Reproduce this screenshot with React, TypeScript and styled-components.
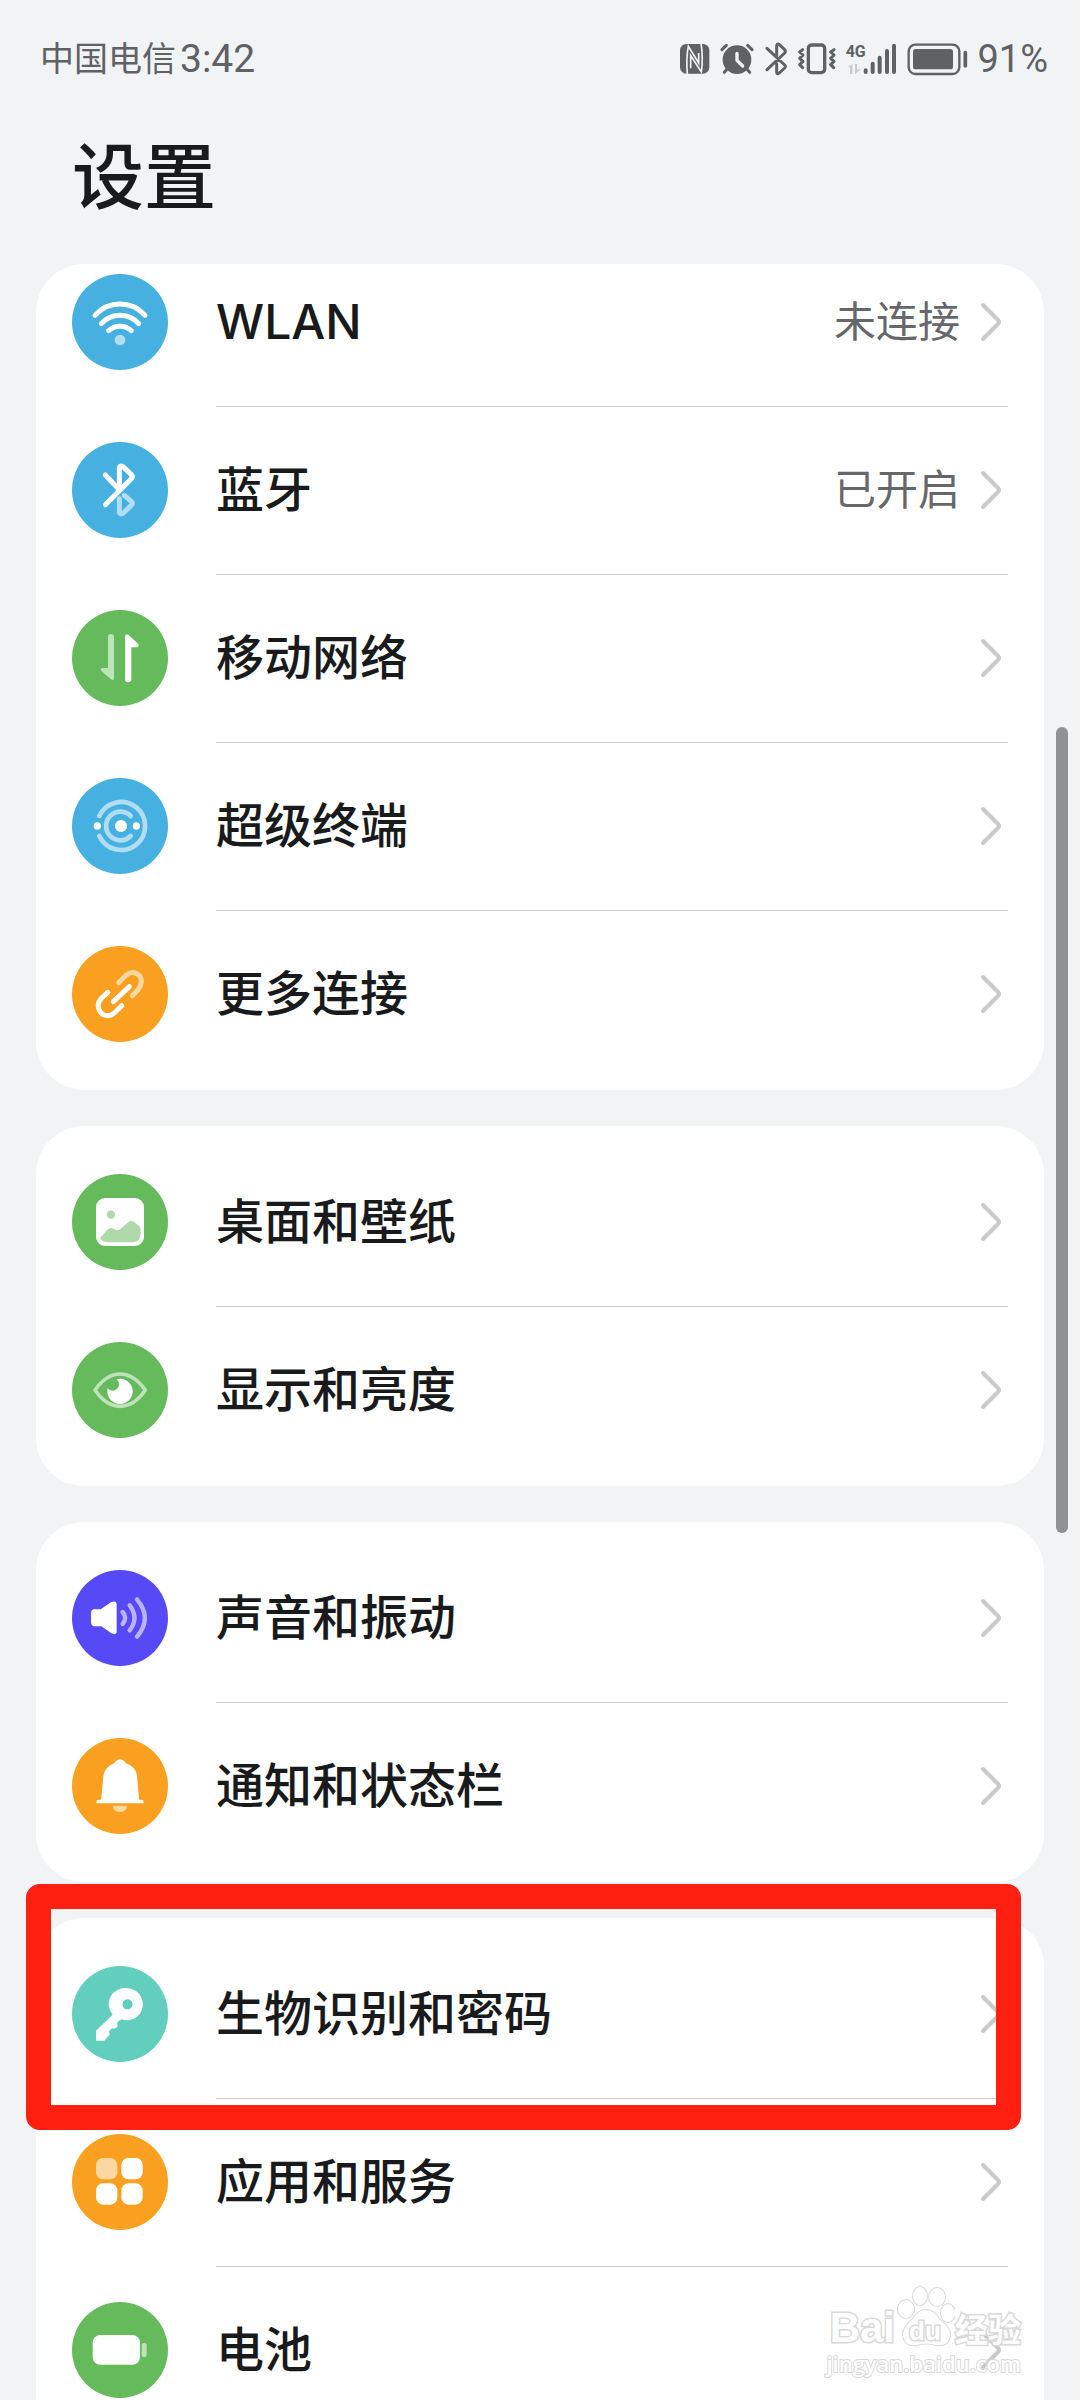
import React from 'react';
import styled, { createGlobalStyle } from 'styled-components';

const color = {
  page: '#f2f3f5',
  card: '#ffffff',
  ink: '#191a1b',
  muted: '#66676a',
  status: '#606164',
  line: '#cbcccd',
  chevron: '#cacacb',
  thumb: '#8f9192',
  marker: '#ff2011',
  blue: '#46b0e0',
  green: '#65bb5c',
  orange: '#f9a020',
  purple: '#564af7',
  teal: '#62cfbe',
  watermark: '#d9d9da',
};

const GlobalStyle = createGlobalStyle`
  *, *::before, *::after { box-sizing: border-box; }
  body {
    margin: 0;
    background: ${color.page};
    color: ${color.ink};
    font-family: Inter, "Noto Sans CJK SC", sans-serif;
  }
`;

const Screen = styled.div`
  position: relative;
  display: flex;
  flex-direction: column;
  height: 100vh;
  overflow: hidden;
  background: ${color.page};
`;

const StatusBar = styled.header`
  display: flex;
  align-items: center;
  justify-content: space-between;
  height: 118px;
  padding: 0 32px 0 40px;
  color: ${color.status};
  font-family: Roboto, "Noto Sans CJK SC", sans-serif;
`;

const StatusGroup = styled.div<{ $gap: number }>`
  display: flex;
  align-items: center;
  gap: ${(p) => p.$gap}px;
`;

const Carrier = styled.span`
  font-size: 34px;
  line-height: 48px;
`;

const Clock = styled.time`
  font-size: 39px;
  line-height: 48px;
`;

const Percent = styled.span`
  font-size: 38px;
  line-height: 48px;
`;

const StatusIcon = styled.svg<{ $width: number }>`
  display: block;
  width: ${(p) => p.$width}px;
  height: 36px;
  fill: none;
  stroke: none;
  font-family: Roboto, sans-serif;
`;

const Title = styled.h1`
  margin: 0;
  padding: 5px 72px 0;
  height: 146px;
  font-size: 72px;
  line-height: 108px;
  font-weight: 500;
`;

const Content = styled.main`
  flex: 1;
  min-height: 0;
  overflow: hidden;
  display: flex;
  flex-direction: column;
  gap: 36px;
  padding: 0 36px;
`;

const Group = styled.section`
  position: relative;
  flex: none;
`;

const Card = styled.ul<{ $scrolled?: boolean }>`
  margin: 0;
  padding: ${(p) => (p.$scrolled ? '0 0 12px' : '12px 0')};
  list-style: none;
  overflow: hidden;
  border-radius: 48px;
  background: ${color.card};

  & > li:first-child {
    margin-top: ${(p) => (p.$scrolled ? '-26px' : '0')};
  }
`;

const RowButton = styled.button`
  display: flex;
  align-items: center;
  gap: 48px;
  width: 100%;
  height: 168px;
  padding: 0 36px;
  border: 0;
  background: transparent;
  color: inherit;
  font: inherit;
  text-align: left;
  cursor: pointer;
`;

const Badge = styled.span<{ $color: string }>`
  flex: none;
  width: 96px;
  height: 96px;
  border-radius: 50%;
  background: ${(p) => p.$color};
`;

const Glyph = styled.svg`
  display: block;
  width: 100%;
  height: 100%;
  fill: none;
  stroke-linecap: round;
  stroke-linejoin: round;
`;

const RowBody = styled.span<{ $first: boolean }>`
  flex: 1;
  display: flex;
  align-items: center;
  gap: 12px;
  height: 100%;
  padding-bottom: 1px;
  border-top: 1px solid ${(p) => (p.$first ? 'transparent' : color.line)};
`;

const Label = styled.span`
  flex: 1;
  font-size: 48px;
  line-height: 64px;
  font-weight: 500;
`;

const Value = styled.span`
  font-size: 42px;
  line-height: 64px;
  color: ${color.muted};
`;

const ChevronIcon = styled.svg`
  flex: none;
  width: 36px;
  height: 48px;
  fill: none;
  stroke: ${color.chevron};
  stroke-width: 4;
  stroke-linecap: round;
  stroke-linejoin: round;
`;

const Marker = styled.div`
  position: absolute;
  top: -34px;
  left: -10px;
  right: 23px;
  height: 246px;
  border: 25px solid ${color.marker};
  border-radius: 14px;
  pointer-events: none;
`;

const ScrollThumb = styled.div`
  position: absolute;
  top: 727px;
  right: 12px;
  width: 12px;
  height: 806px;
  border-radius: 6px;
  background: ${color.thumb};
`;

const Watermark = styled.div`
  position: absolute;
  right: 59px;
  bottom: 24px;
  display: flex;
  flex-direction: column;
  align-items: flex-end;
  color: ${color.card};
  -webkit-text-stroke: 3px ${color.watermark};
  paint-order: stroke fill;
  pointer-events: none;
`;

const WatermarkTop = styled.div`
  display: flex;
  align-items: flex-end;
  height: 66px;
`;

const WatermarkLatin = styled.span`
  font: bold 42px/44px "Liberation Sans", sans-serif;
`;

const WatermarkHan = styled.span`
  font: bold 33px/44px "Noto Sans CJK SC", sans-serif;
`;

const WatermarkUrl = styled.span`
  font: 600 22px/26px "Open Sans", sans-serif;
  -webkit-text-stroke-width: 2px;
`;

const PawBox = styled.span`
  position: relative;
  display: flex;
  justify-content: center;
  align-items: flex-end;
  width: 60px;
  height: 66px;
  font: bold 26px/38px "Liberation Sans", sans-serif;
`;

const Paw = styled.svg`
  position: absolute;
  inset: 0;
  width: 60px;
  height: 64px;
  fill: ${color.card};
  stroke: ${color.watermark};
  stroke-width: 2;
`;

const PawText = styled.span`
  position: relative;
`;

const soft = 0.58;

function WlanGlyph() {
  return (
    <Glyph viewBox="0 0 288 288" stroke="#fff" strokeWidth="15">
      <path d="M69 124A100 100 0 0 1 219 124" />
      <path d="M88 149A75 75 0 0 1 200 149" />
      <path d="M110 170A50 50 0 0 1 178 170" />
      <circle cx="144" cy="198" r="16" fill="#fff" stroke="none" opacity={soft} />
    </Glyph>
  );
}

function BluetoothGlyph() {
  return (
    <Glyph viewBox="0 0 288 288" stroke="#fff" strokeWidth="15">
      <path
        d="M157 160L178 178Q184 184 178 190L154 213Q142 220 142 208V170"
        opacity={soft}
      />
      <path d="M100 99L142 143V80Q142 68 153 74L178 98Q184 104 178 110L100 188" />
    </Glyph>
  );
}

function MobileGlyph() {
  return (
    <Glyph viewBox="0 0 288 288">
      <path
        fill="#fff"
        opacity={soft}
        d="M108 81a9 9 0 0 1 18 0V205Q126 212 119 209L88 183Q83 175 92 174H108z"
      />
      <path
        fill="#fff"
        d="M159 80Q160 69 169 74L199 102Q203 111 194 112H178V207a9 9 0 0 1 -19 0z"
      />
    </Glyph>
  );
}

function DeviceGlyph() {
  return (
    <Glyph viewBox="0 0 288 288">
      <g stroke="#fff" strokeWidth="14" opacity={soft}>
        <path d="M82 114A72 72 0 1 1 82 174" />
        <path d="M176 114A43 43 0 1 0 176 174" />
      </g>
      <g fill="#fff">
        <circle cx="147" cy="144" r="18" />
        <circle cx="76" cy="144" r="11" />
        <circle cx="193" cy="144" r="11" />
      </g>
    </Glyph>
  );
}

function LinkGlyph() {
  return (
    <Glyph viewBox="0 0 288 288" stroke="#fff" strokeWidth="15">
      <path
        opacity={soft}
        d="M140 110L162 88C182 70 209 84 208 108Q207 120 198 131L181 149"
      />
      <path d="M172 122L124 167" />
      <path d="M107 139L89 156C68 178 82 209 109 209Q119 208 128 200L149 179" />
    </Glyph>
  );
}

function WallpaperGlyph() {
  return (
    <Glyph viewBox="0 0 288 288">
      <rect x="72" y="72" width="144" height="144" rx="27" fill="#fff" />
      <g fill="#b0d9ab">
        <circle cx="117" cy="122" r="12.5" />
        <path d="M84 192L106 167Q115 158 126 165Q136 174 147 163L170 144Q179 138 188 145L202 157Q206 161 206 166V180Q205 203 184 205H108Q88 203 84 192z" />
      </g>
    </Glyph>
  );
}

function EyeGlyph() {
  return (
    <Glyph viewBox="0 0 288 288">
      <circle cx="144" cy="148" r="38" fill="#fff" />
      <circle cx="122" cy="127" r="19" fill={color.green} />
      <path fill={color.green} d="M100 138L133 104L128 90L90 120z" />
      <path
        stroke="#bfe2bb"
        strokeWidth="11"
        d="M69 144C92 112 117 96 144 96S197 112 220 144C197 178 171 193 144 193S92 178 69 144Z"
      />
    </Glyph>
  );
}

function SoundGlyph() {
  return (
    <Glyph viewBox="0 0 288 288">
      <path
        fill="#fff"
        d="M68 118H86L118 96Q134 90 134 104V184Q134 197 118 190L88 169H68Q57 168 57 156V130Q57 118 68 117z"
      />
      <g stroke="#fff" strokeWidth="13" opacity={soft}>
        <path d="M152 126Q167 144 152 162" />
        <path d="M173 106Q202 144 173 181" />
        <path d="M195 88Q242 144 195 200" />
      </g>
    </Glyph>
  );
}

function BellGlyph() {
  return (
    <Glyph viewBox="0 0 288 288">
      <path
        fill="#fff"
        d="M144 64Q154 64 162 76Q192 86 195 114L201 182Q202 186 207 186H213Q218 196 211 196H77Q70 196 75 186H81Q87 186 88 180L94 114Q98 86 127 76Q134 64 144 64z"
      />
      <path fill="#fff" opacity={soft} d="M122 203H166Q162 222 144 222Q125 222 122 203z" />
    </Glyph>
  );
}

function KeyGlyph() {
  return (
    <Glyph viewBox="0 0 288 288">
      <path
        fill="#fff"
        fillRule="evenodd"
        d="M166 67a48 48 0 1 1 -18 93L136 169Q135 174 137 180Q130 191 120 187L110 197Q114 202 113 206L97 224H72V194L122 146A48 48 0 0 1 166 67zM166 100a15 15 0 1 0 1 0z"
      />
    </Glyph>
  );
}

function AppsGlyph() {
  return (
    <Glyph viewBox="0 0 288 288">
      <g fill="#fff">
        <rect x="72" y="72" width="64" height="64" rx="21" opacity={soft} />
        <rect x="148" y="72" width="64" height="64" rx="21" />
        <rect x="72" y="148" width="64" height="64" rx="21" />
        <rect x="148" y="148" width="64" height="64" rx="21" />
      </g>
    </Glyph>
  );
}

function BatteryGlyph() {
  return (
    <Glyph viewBox="0 0 288 288">
      <rect x="62" y="99" width="142" height="89" rx="23" fill="#fff" />
      <rect x="209" y="123" width="15" height="43" rx="7" fill="#fff" opacity={soft} />
    </Glyph>
  );
}

function StatusIcons() {
  const c = color.status;
  return (
    <>
      <StatusIcon $width={32} viewBox="60 60 96 108" role="img" aria-label="NFC">
        <rect x="63" y="69" width="88" height="89" rx="19" fill={c} />
        <g stroke={color.page} strokeWidth="5" fill="none">
          <path d="M85 160Q81 110 88 76L119 126V96" />
          <path d="M95 142V104L127 153Q133 110 126 66" />
        </g>
      </StatusIcon>
      <StatusIcon $width={35} viewBox="183 60 105 108" role="img" aria-label="闹钟">
        <circle cx="234" cy="116" r="43" fill={c} />
        <g stroke={c} strokeWidth="9" strokeLinecap="round">
          <path d="M189 86L202 73M279 86L266 73M204 145L196 154M264 145L272 154" />
        </g>
        <path
          d="M234 97V118L251 135"
          stroke={color.page}
          strokeWidth="10"
          strokeLinecap="round"
          strokeLinejoin="round"
        />
      </StatusIcon>
      <StatusIcon $width={24} viewBox="312 60 72 108" role="img" aria-label="蓝牙">
        <path
          d="M321 82L374 132Q378 137 374 141L358 156Q350 162 350 152V128M321 146L374 96Q378 91 374 86L358 71Q350 66 350 76V104"
          stroke={c}
          strokeWidth="9"
          strokeLinecap="round"
          strokeLinejoin="round"
        />
      </StatusIcon>
      <StatusIcon $width={39} viewBox="412 60 117 108" role="img" aria-label="振动">
        <rect x="446" y="72" width="49" height="83" rx="10" stroke={c} strokeWidth="10" />
        <g stroke={c} strokeWidth="9" strokeLinecap="round" strokeLinejoin="round">
          <path d="M429 86L420 93L430 102L420 112L430 121L420 131L429 140" />
          <path d="M523 86L513 93L523 102L513 112L523 121L513 131L522 140" />
        </g>
      </StatusIcon>
      <StatusIcon $width={53} viewBox="556 60 159 108" role="img" aria-label="4G 信号">
        <text x="558" y="108" fontSize="48" fontWeight="700" fill={c}>
          4G
        </text>
        <path
          d="M564 138L578 129V159H571V138zM586 129H592V146L606 144L586 159z"
          fill="#c9cacc"
        />
        <g stroke={c} strokeWidth="12" strokeLinecap="round">
          <path d="M618 148V153M639 128V153M660 110V153M682 90V153M703 74V153" />
        </g>
      </StatusIcon>
      <StatusIcon $width={61} viewBox="744 60 183 108" role="img" aria-label="电池">
        <rect x="749" y="71" width="152" height="88" rx="20" stroke={c} strokeWidth="7" />
        <rect x="762" y="84" width="120" height="61" rx="8" fill={c} />
        <path d="M919 95V135" stroke={c} strokeWidth="11" strokeLinecap="round" />
      </StatusIcon>
    </>
  );
}

type Item = {
  label: string;
  value?: string;
  tint: string;
  glyph: React.ReactNode;
};

type GroupData = {
  id: string;
  items: Item[];
  scrolled?: boolean;
  marked?: boolean;
};

const groups: GroupData[] = [
  {
    id: 'network',
    scrolled: true,
    items: [
      { label: 'WLAN', value: '未连接', tint: color.blue, glyph: <WlanGlyph /> },
      { label: '蓝牙', value: '已开启', tint: color.blue, glyph: <BluetoothGlyph /> },
      { label: '移动网络', tint: color.green, glyph: <MobileGlyph /> },
      { label: '超级终端', tint: color.blue, glyph: <DeviceGlyph /> },
      { label: '更多连接', tint: color.orange, glyph: <LinkGlyph /> },
    ],
  },
  {
    id: 'display',
    items: [
      { label: '桌面和壁纸', tint: color.green, glyph: <WallpaperGlyph /> },
      { label: '显示和亮度', tint: color.green, glyph: <EyeGlyph /> },
    ],
  },
  {
    id: 'sound',
    items: [
      { label: '声音和振动', tint: color.purple, glyph: <SoundGlyph /> },
      { label: '通知和状态栏', tint: color.orange, glyph: <BellGlyph /> },
    ],
  },
  {
    id: 'security',
    marked: true,
    items: [
      { label: '生物识别和密码', tint: color.teal, glyph: <KeyGlyph /> },
      { label: '应用和服务', tint: color.orange, glyph: <AppsGlyph /> },
      { label: '电池', tint: color.green, glyph: <BatteryGlyph /> },
    ],
  },
];

function Row({ item, first }: { item: Item; first: boolean }) {
  return (
    <li>
      <RowButton type="button">
        <Badge $color={item.tint}>{item.glyph}</Badge>
        <RowBody $first={first}>
          <Label>{item.label}</Label>
          {item.value && <Value>{item.value}</Value>}
          <ChevronIcon viewBox="0 0 36 48" aria-hidden="true">
            <path d="M11 7L26 22Q28 24 26 26L11 41" />
          </ChevronIcon>
        </RowBody>
      </RowButton>
    </li>
  );
}

export default function App() {
  return (
    <>
      <GlobalStyle />
      <Screen>
        <StatusBar>
          <StatusGroup $gap={4}>
            <Carrier>中国电信</Carrier>
            <Clock>3:42</Clock>
          </StatusGroup>
          <StatusGroup $gap={9}>
            <StatusIcons />
            <Percent>91%</Percent>
          </StatusGroup>
        </StatusBar>
        <Title>设置</Title>
        <Content>
          {groups.map((group) => (
            <Group key={group.id}>
              <Card $scrolled={group.scrolled}>
                {group.items.map((item, i) => (
                  <Row key={item.label} item={item} first={i === 0} />
                ))}
              </Card>
              {group.marked && <Marker />}
            </Group>
          ))}
        </Content>
        <ScrollThumb />
        <Watermark>
          <WatermarkTop>
            <WatermarkLatin>Bai</WatermarkLatin>
            <PawBox>
              <Paw viewBox="0 0 60 64" aria-hidden="true">
                <ellipse cx="11" cy="25" rx="8" ry="9" />
                <ellipse cx="25" cy="12" rx="7" ry="9" />
                <ellipse cx="42" cy="13" rx="8" ry="9" />
                <ellipse cx="53" cy="29" rx="7" ry="9" />
                <path d="M31 26Q39 26 44 35Q56 44 55 52Q53 63 41 61Q31 58 22 61Q9 63 8 50Q8 44 18 35Q23 26 31 26z" />
              </Paw>
              <PawText>du</PawText>
            </PawBox>
            <WatermarkHan>经验</WatermarkHan>
          </WatermarkTop>
          <WatermarkUrl>jingyan.baidu.com</WatermarkUrl>
        </Watermark>
      </Screen>
    </>
  );
}
